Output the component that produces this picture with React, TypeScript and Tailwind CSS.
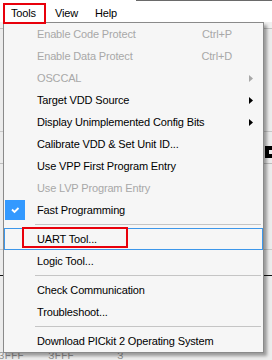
import React from 'react';

interface MenuItem {
  label: string;
  shortcut?: string;
  submenu?: boolean;
  disabled?: boolean;
  checked?: boolean;
  highlighted?: boolean;
}

type Entry = MenuItem | 'sep';

const entries: Entry[] = [
  { label: 'Enable Code Protect', shortcut: 'Ctrl+P', disabled: true },
  { label: 'Enable Data Protect', shortcut: 'Ctrl+D', disabled: true },
  { label: 'OSCCAL', submenu: true, disabled: true },
  { label: 'Target VDD Source', submenu: true },
  { label: 'Display Unimplemented Config Bits', submenu: true },
  { label: 'Calibrate VDD & Set Unit ID...' },
  { label: 'Use VPP First Program Entry' },
  { label: 'Use LVP Program Entry', disabled: true },
  { label: 'Fast Programming', checked: true },
  'sep',
  { label: 'UART Tool...', highlighted: true },
  { label: 'Logic Tool...' },
  'sep',
  { label: 'Check Communication' },
  { label: 'Troubleshoot...' },
  'sep',
  { label: 'Download PICkit 2 Operating System' },
];

const Arrow = ({ disabled }: { disabled?: boolean }) => (
  <svg width="4" height="7" viewBox="0 0 4 7">
    <path d="M0 0L4 3.5L0 7Z" fill={disabled ? '#a8a8a8' : '#000'} />
  </svg>
);

const Row = ({ item }: { item: MenuItem }) => (
  <div
    className={`relative h-[22px] flex items-center ${
      item.highlighted ? 'border border-[#3d97ea]' : ''
    } ${item.disabled ? 'text-[#a8a8a8]' : 'text-black'}`}
  >
    <div className={`h-full flex items-center shrink-0 ${item.highlighted ? 'w-[32px]' : 'w-[33px]'}`}>
      {item.checked && (
        <div className="ml-[1px] w-[20px] h-[20px] bg-[#3399ff] flex items-center justify-center">
          <svg width="20" height="20" viewBox="0 0 20 20">
            <path d="M7 9.5l2.5 2.5L13.5 8" stroke="#fff" strokeWidth="1.8" fill="none" />
          </svg>
        </div>
      )}
    </div>
    <span className="flex-1 whitespace-nowrap">{item.label}</span>
    {item.shortcut && <span className="whitespace-nowrap">{item.shortcut}</span>}
    <div className="w-[31px] shrink-0 pl-[17px] flex items-center">
      {item.submenu && <Arrow disabled={item.disabled} />}
    </div>
    {item.highlighted && (
      <div className="absolute left-[17px] top-[-2px] w-[106px] h-[21px] border-2 border-[#e8000b]" />
    )}
  </div>
);

export default function App() {
  return (
    <div className="relative w-[272px] h-[360px] overflow-hidden bg-[#ececec] font-['Liberation_Sans',Arial,sans-serif] text-[11px] tracking-[-0.15px]">
      {/* menu bar */}
      <div className="relative h-[22px] bg-white flex items-start">
        <div className="relative z-20 ml-[3px] mt-[3px] w-[43px] h-[21px] border-2 border-[#e8000b] pl-[6px] flex items-center">
          Tools
        </div>
        <div className="ml-[9px] w-[40px] h-[22px] flex items-center pt-[4px]">View</div>
        <div className="h-[22px] flex items-center pt-[4px]">Help</div>
        <div className="absolute top-0 left-[136px] right-0 h-px bg-[#6a6a6a]" />
      </div>

      {/* window behind */}
      <div className="flex flex-col">
        <div className="h-[7px] border-b border-[#c4c4c4] bg-[#f0f0f0]" />
        <div className="h-[103px] border-b border-[#c8c8c8]" />
        <div className="h-[14px]" />
        <div className="h-[12px] ml-[265px] border-4 border-r-0 border-black" />
        <div className="h-[6px] border-b border-[#bdbdbd]" />
        <div className="h-[86px] border-b border-[#c8c8c8]" />
        <div className="h-[26px] border-b border-[#111]" />
        <div className="h-[75px]" />
        <div className="h-[12px] flex text-[#909090] font-['Liberation_Mono',monospace] text-[11px] leading-none overflow-hidden">
          <span className="ml-[-2px] w-[50px]">3FFF</span>
          <span className="w-[69px]">3FFF</span>
          <span>3</span>
        </div>
      </div>

      {/* dropdown */}
      <div className="absolute z-10 left-[3px] top-[22px] w-[261px] border border-[#8a8a8a] bg-[#f6f6f6] shadow-[3px_3px_3px_rgba(0,0,0,0.35)]">
        {entries.map((e, i) =>
          e === 'sep' ? (
            <div key={i} className="h-[7px] flex items-center pl-[31px] pr-[2px]">
              <div className="h-px w-full bg-[#c5c5c5]" />
            </div>
          ) : (
            <Row key={i} item={e} />
          )
        )}
      </div>
    </div>
  );
}
